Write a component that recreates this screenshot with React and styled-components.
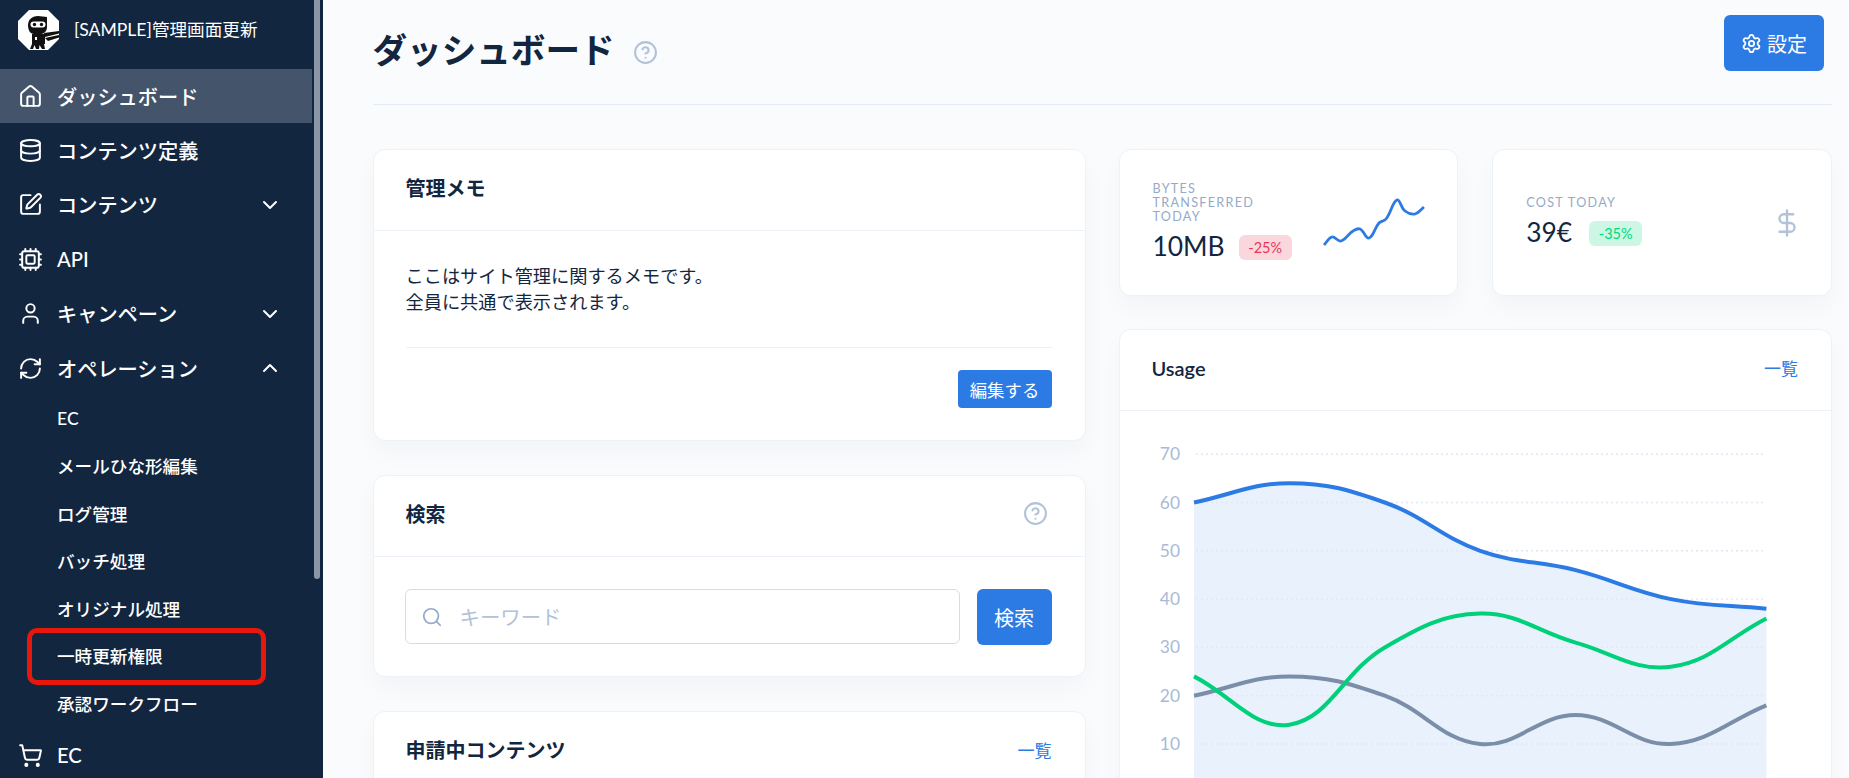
import React from 'react';
import styled, { createGlobalStyle } from 'styled-components';
import {
  House,
  Database,
  SquarePen,
  Cpu,
  User,
  RefreshCw,
  ShoppingCart,
  ChevronDown,
  ChevronUp,
  CircleHelp,
  Search,
  Settings,
  DollarSign,
} from 'lucide-react';

const GlobalStyle = createGlobalStyle`
  html, body {
    margin: 0;
    padding: 0;
    height: 100%;
    overflow: hidden;
    background: #f9fbfd;
    color: #12263f;
    font-family: "Lato", "Noto Sans CJK JP", sans-serif;
  }
  * {
    box-sizing: border-box;
  }
`;

const Layout = styled.div`
  display: flex;
  height: 100vh;
  overflow: hidden;
`;

const Sidebar = styled.aside`
  position: relative;
  flex: 0 0 323px;
  background: #13263f;
  color: #fff;
`;

const ScrollThumb = styled.div`
  position: absolute;
  top: 0;
  right: 3px;
  width: 6px;
  height: 579px;
  background: #8a95a5;
  border-radius: 0 0 3px 3px;
`;

const Brand = styled.div`
  display: flex;
  align-items: center;
  gap: 15px;
  height: 69px;
  padding: 0 0 9px 18px;
  font-size: 17.6px;

  span {
    padding-bottom: 4px;
  }
`;

const NavItem = styled.div`
  display: flex;
  align-items: center;
  width: 312px;
  height: 54.4px;
  padding-left: 18px;
  font-size: 20.2px;
  font-weight: 500;
  background: ${(p) => (p.$active ? '#43546b' : 'transparent')};

  svg.nav-icon {
    flex: none;
    margin-right: 14px;
  }
  svg.chevron {
    margin-left: auto;
    margin-right: 30px;
  }
`;

const SubItem = styled.div`
  position: relative;
  display: flex;
  align-items: center;
  height: 47.5px;
  padding: 0 0 2px 57px;
  font-size: 17.6px;
  font-weight: 500;

  ${(p) =>
    p.$marked &&
    `
    &::after {
      content: '';
      box-sizing: border-box;
      position: absolute;
      left: 27px;
      width: 239px;
      top: -5px;
      bottom: -5px;
      border: 5px solid #e8170c;
      border-radius: 10px;
    }
  `}
`;

const Main = styled.main`
  flex: 1;
  min-width: 0;
  padding: 0 17px 0 49.5px;
`;

const Header = styled.header`
  display: flex;
  justify-content: space-between;
  align-items: flex-start;
  height: 105px;
  padding-right: 8px;
  border-bottom: 1px solid #e3ebf6;
`;

const TitleRow = styled.div`
  display: flex;
  align-items: center;
  gap: 18px;
  margin-top: 25px;
  color: #b1c2d9;

  svg {
    margin-top: 5px;
  }
`;

const PageTitle = styled.h1`
  margin: 0;
  font-size: 34.6px;
  line-height: 50px;
  font-weight: 700;
  color: #12263f;
`;

const Button = styled.button`
  display: inline-flex;
  align-items: center;
  justify-content: center;
  gap: 5px;
  border: 0;
  padding: 0;
  color: #fff;
  background: #2c7be5;
  font-family: inherit;
  border-radius: ${(p) => p.$radius || 6}px;
  font-size: ${(p) => p.$size || 20}px;
  width: ${(p) => p.$w}px;
  height: ${(p) => p.$h}px;
  flex: none;
`;

const SettingsButton = styled(Button)`
  margin-top: 15px;
`;

const Columns = styled.div`
  display: grid;
  grid-template-columns: 713px 1fr;
  column-gap: 33px;
  margin-top: 44px;
`;

const Column = styled.div`
  display: flex;
  flex-direction: column;
  gap: ${(p) => p.$gap}px;
`;

const Card = styled.section`
  background: #fff;
  border: 1px solid #edf2f9;
  border-radius: 12px;
  box-shadow: 0 12px 24px rgba(18, 38, 63, 0.03);
`;

const CardHead = styled.div`
  display: flex;
  align-items: center;
  justify-content: space-between;
  height: 81px;
  padding: 0 33px 5px 32px;
  border-bottom: 1px solid #edf2f9;
  color: #b1c2d9;
`;

const CardTitle = styled.h2`
  margin: 0;
  font-size: 20px;
  font-weight: 600;
  color: #12263f;
`;

const HeadHelp = styled(CircleHelp)`
  margin-right: 4px;
`;

const ListLink = styled.a`
  font-size: 17px;
  color: #2c7be5;
`;

const MemoBody = styled.div`
  padding: 32px 33px 32px 32px;
  font-size: 18.2px;
  line-height: 26px;
`;

const MemoRule = styled.hr`
  border: 0;
  border-top: 1px solid #edf2f9;
  margin: 32px 0 22px;
`;

const MemoFoot = styled.div`
  display: flex;
  justify-content: flex-end;
`;

const SearchBody = styled.div`
  display: flex;
  gap: 17px;
  padding: 32px 33px 31px 31px;
`;

const SearchField = styled.div`
  flex: 1;
  display: flex;
  align-items: center;
  gap: 15px;
  height: 55px;
  padding-left: 15px;
  background: #fff;
  border: 1px solid #d2ddec;
  border-radius: 6px;
  color: #95aac9;
`;

const SearchInput = styled.input`
  flex: 1;
  min-width: 0;
  border: 0;
  outline: 0;
  background: none;
  font-family: inherit;
  font-size: 20.4px;
  &::placeholder {
    color: #b1c2d9;
  }
`;

const StatRow = styled.div`
  display: grid;
  grid-template-columns: 1fr 1fr;
  column-gap: 34px;
`;

const StatCard = styled(Card)`
  display: flex;
  align-items: center;
  justify-content: space-between;
  height: 147px;
  padding: 0 ${(p) => p.$right}px 0 33px;
  color: #b1c2d9;
`;

const StatBlock = styled.div`
  margin-top: -2px;
`;

const StatLabel = styled.div`
  max-width: ${(p) => (p.$wrap ? '120px' : 'none')};
  font-size: 12.6px;
  line-height: 14px;
  letter-spacing: 1.3px;
  text-transform: uppercase;
  color: #95aac9;
`;

const StatValueRow = styled.div`
  display: flex;
  align-items: center;
  gap: ${(p) => p.$gap || 14}px;
  margin-top: 7px;
`;

const StatValue = styled.span`
  font-size: 26.4px;
  line-height: 30px;
  color: #12263f;
`;

const Badge = styled.span`
  display: inline-flex;
  align-items: center;
  justify-content: center;
  width: 53px;
  height: 25px;
  margin-top: 3px;
  border-radius: 6px;
  font-size: 14.5px;
  color: ${(p) => (p.$tone === 'up' ? '#00d97e' : '#e63757')};
  background: ${(p) => (p.$tone === 'up' ? '#ccf7e5' : '#fad7dd')};
`;

const Spark = styled.svg`
  display: block;
  flex: none;
`;

const UsageCard = styled(Card)`
  height: 600px;
`;

const ChartSvg = styled.svg`
  display: block;
  margin: 27px 0 0 33px;
  overflow: visible;
`;

// chart.js のベジェと同じ計算 (tension 0.4)
function splinePath(pts) {
  const t = 0.4;
  const ctrl = pts.map((p, i) => {
    const a = pts[i - 1] || p;
    const b = pts[i + 1] || p;
    const d01 = Math.hypot(p[0] - a[0], p[1] - a[1]);
    const d12 = Math.hypot(b[0] - p[0], b[1] - p[1]);
    const sum = d01 + d12 || 1;
    const fa = (t * d01) / sum;
    const fb = (t * d12) / sum;
    return {
      prev: [p[0] - fa * (b[0] - a[0]), p[1] - fa * (b[1] - a[1])],
      next: [p[0] + fb * (b[0] - a[0]), p[1] + fb * (b[1] - a[1])],
    };
  });
  let d = `M${pts[0][0]} ${pts[0][1]}`;
  for (let i = 1; i < pts.length; i++) {
    const c1 = ctrl[i - 1].next;
    const c2 = ctrl[i].prev;
    d += ` C${c1[0]} ${c1[1]} ${c2[0]} ${c2[1]} ${pts[i][0]} ${pts[i][1]}`;
  }
  return d;
}

const chartX = (i) => 41 + i * 95.4;
const chartY = (v) => 354.3 - 4.83 * v;
const toPoints = (data) => data.map((v, i) => [chartX(i), chartY(v)]);

const blue = [60, 64, 60, 50, 46, 40, 38];
const gray = [20, 24, 20, 10, 16, 10, 18];
const green = [24, 14, 30, 37, 31, 26, 36];

const sparkPoints = [
  [0, 46], [8, 38], [17, 42], [29, 32], [36, 30], [45, 39],
  [55, 24], [62, 20], [73, 1], [81, 12], [91, 15], [100, 8],
];

function UsageChart() {
  const bluePath = splinePath(toPoints(blue));
  return (
    <ChartSvg width="644" height="360" viewBox="0 0 644 360">
      <path
        d={`${bluePath} L${chartX(6)} ${chartY(0)} L${chartX(0)} ${chartY(0)} Z`}
        fill="#2c7be5"
        fillOpacity="0.1"
      />
      {[70, 60, 50, 40, 30, 20, 10].map((v) => (
        <g key={v}>
          <line
            x1="43"
            x2="613"
            y1={chartY(v)}
            y2={chartY(v)}
            stroke="#dfe8f4"
            strokeWidth="1.4"
            strokeDasharray="2 3"
          />
          <text
            x="27"
            y={chartY(v) + 6}
            textAnchor="end"
            fontSize="17.4"
            fill="#a9bad4"
            fontFamily="Lato, sans-serif"
          >
            {v}
          </text>
        </g>
      ))}
      <path d={bluePath} fill="none" stroke="#2c7be5" strokeWidth="4" />
      <path d={splinePath(toPoints(gray))} fill="none" stroke="#7b8ea9" strokeWidth="4" />
      <path d={splinePath(toPoints(green))} fill="none" stroke="#00d07a" strokeWidth="4" />
    </ChartSvg>
  );
}

function NinjaLogo() {
  return (
    <svg width="41" height="40" viewBox="0 0 41 40" style={{ flex: 'none' }}>
      <polygon points="11,0 30,0 41,11 41,29 30,40 11,40 0,29 0,11" fill="#fff" />
      <path d="M10 15C10 9 15 6 20 6L29 7L29 17C29 21 26 24 23 24H16C12 24 10 20 10 15Z" fill="#111" />
      <path d="M14 24H27V34H14Z" fill="#111" />
      <rect x="12.5" y="11.5" width="15" height="6" rx="3" fill="#fff" />
      <circle cx="16.5" cy="14.5" r="1.7" fill="#111" />
      <circle cx="23.5" cy="14.5" r="1.7" fill="#111" />
      <path d="M26 23L41 21V23.5L27 27ZM27 28L41 25V27.5L30 31Z" fill="#111" />
      <path d="M14 34L12 39H15L16.5 35L18 39H21L21.5 35L24 39H27L26 34Z" fill="#111" />
      <rect x="17" y="27" width="2" height="3" fill="#fff" />
    </svg>
  );
}

const mainNav = [
  { label: 'ダッシュボード', icon: House, active: true },
  { label: 'コンテンツ定義', icon: Database },
  { label: 'コンテンツ', icon: SquarePen, chevron: 'down' },
  { label: 'API', icon: Cpu },
  { label: 'キャンペーン', icon: User, chevron: 'down' },
  { label: 'オペレーション', icon: RefreshCw, chevron: 'up' },
];

const subNav = [
  'EC',
  'メールひな形編集',
  'ログ管理',
  'バッチ処理',
  'オリジナル処理',
  '一時更新権限',
  '承認ワークフロー',
];

function Nav({ item }) {
  const Icon = item.icon;
  return (
    <NavItem $active={item.active}>
      <Icon className="nav-icon" size={25} strokeWidth={1.9} />
      {item.label}
      {item.chevron === 'down' && <ChevronDown className="chevron" size={24} strokeWidth={2} />}
      {item.chevron === 'up' && <ChevronUp className="chevron" size={24} strokeWidth={2} />}
    </NavItem>
  );
}

export default function App() {
  return (
    <>
      <GlobalStyle />
      <Layout>
        <Sidebar>
          <ScrollThumb />
          <Brand>
            <NinjaLogo />
            <span>[SAMPLE]管理画面更新</span>
          </Brand>
          {mainNav.map((item) => (
            <Nav key={item.label} item={item} />
          ))}
          {subNav.map((label) => (
            <SubItem key={label} $marked={label === '一時更新権限'}>
              {label}
            </SubItem>
          ))}
          <Nav item={{ label: 'EC', icon: ShoppingCart }} />
        </Sidebar>

        <Main>
          <Header>
            <TitleRow>
              <PageTitle>ダッシュボード</PageTitle>
              <CircleHelp size={25} strokeWidth={2} />
            </TitleRow>
            <SettingsButton $w={100} $h={56}>
              <Settings size={21} strokeWidth={2} />
              設定
            </SettingsButton>
          </Header>

          <Columns>
            <Column $gap={34}>
              <Card>
                <CardHead>
                  <CardTitle>管理メモ</CardTitle>
                </CardHead>
                <MemoBody>
                  ここはサイト管理に関するメモです。
                  <br />
                  全員に共通で表示されます。
                  <MemoRule />
                  <MemoFoot>
                    <Button $w={94} $h={38} $size={17.4} $radius={4}>
                      編集する
                    </Button>
                  </MemoFoot>
                </MemoBody>
              </Card>

              <Card>
                <CardHead>
                  <CardTitle>検索</CardTitle>
                  <HeadHelp size={25} strokeWidth={2} />
                </CardHead>
                <SearchBody>
                  <SearchField>
                    <Search size={22} strokeWidth={1.9} />
                    <SearchInput placeholder="キーワード" />
                  </SearchField>
                  <Button $w={75} $h={56}>
                    検索
                  </Button>
                </SearchBody>
              </Card>

              <Card>
                <CardHead>
                  <CardTitle>申請中コンテンツ</CardTitle>
                  <ListLink>一覧</ListLink>
                </CardHead>
              </Card>
            </Column>

            <Column $gap={33}>
              <StatRow>
                <StatCard $right={31}>
                  <StatBlock>
                    <StatLabel $wrap>Bytes Transferred Today</StatLabel>
                    <StatValueRow>
                      <StatValue>10MB</StatValue>
                      <Badge>-25%</Badge>
                    </StatValueRow>
                  </StatBlock>
                  <Spark width="104" height="51" viewBox="-2 -2 104 51">
                    <path d={splinePath(sparkPoints)} fill="none" stroke="#2c7be5" strokeWidth="2.8" />
                  </Spark>
                </StatCard>
                <StatCard $right={29}>
                  <StatBlock>
                    <StatLabel>Cost Today</StatLabel>
                    <StatValueRow $gap={17}>
                      <StatValue>39€</StatValue>
                      <Badge $tone="up">-35%</Badge>
                    </StatValueRow>
                  </StatBlock>
                  <DollarSign size={30} strokeWidth={1.9} />
                </StatCard>
              </StatRow>

              <UsageCard>
                <CardHead>
                  <CardTitle>Usage</CardTitle>
                  <ListLink>一覧</ListLink>
                </CardHead>
                <UsageChart />
              </UsageCard>
            </Column>
          </Columns>
        </Main>
      </Layout>
    </>
  );
}
